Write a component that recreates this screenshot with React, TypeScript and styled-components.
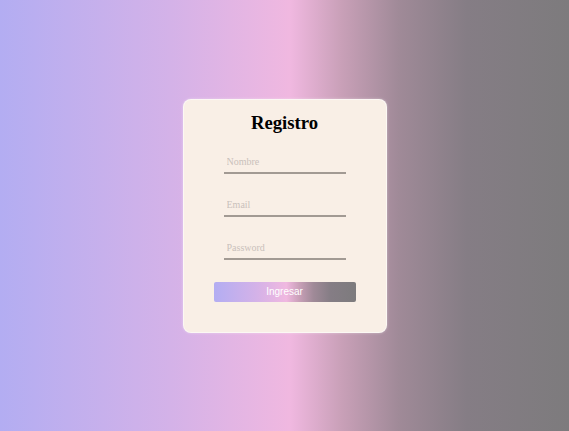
import React from "react";
import styled, { createGlobalStyle } from "styled-components";

const GRADIENT =
  "linear-gradient(90deg, #b3adf2 0%, #d4b2e8 30%, #f0b8e0 51%, #c9a0b8 60%, #a08a98 70%, #857d85 82%, #7d7b7d 100%)";

const Global = createGlobalStyle`
  html, body { margin: 0; padding: 0; }
  body { font-family: "Liberation Serif", "Times New Roman", serif; }
`;

const Page = styled.main`
  width: 100vw;
  height: 100vh;
  box-sizing: border-box;
  display: flex;
  align-items: center;
  justify-content: center;
  background: ${GRADIENT};
`;

const Card = styled.form`
  width: 204px;
  box-sizing: border-box;
  padding: 11px 0 30px;
  display: flex;
  flex-direction: column;
  align-items: center;
  background: #f9efe6;
  border: 1px solid rgba(255, 255, 255, 0.55);
  border-radius: 8px;
  box-shadow: 0 0 3px rgba(255, 255, 255, 0.4);
`;

const Title = styled.h3`
  margin: 0 0 17px;
  font-family: "Liberation Serif", "Times New Roman", serif;
  font-size: 18.72px;
  line-height: 24px;
  font-weight: bold;
  color: #000;
`;

const Field = styled.input`
  width: 122px;
  height: 22px;
  box-sizing: border-box;
  margin: 0 0 21px;
  padding: 4px 3px;
  border: none;
  border-bottom: 2px solid #a29a93;
  background: transparent;
  font-family: "Liberation Serif", "Times New Roman", serif;
  font-size: 10px;
  color: #333;
  outline: none;
  &::placeholder { color: #c9c1bb; }
`;

const Submit = styled.button`
  width: 142px;
  height: 20px;
  margin-top: 1px;
  border: none;
  border-radius: 2px;
  background: ${GRADIENT};
  color: #fff;
  font-family: "Liberation Sans", Arial, sans-serif;
  font-size: 10px;
  cursor: pointer;
`;

export default function App() {
  return (
    <>
      <Global />
      <Page>
        <Card onSubmit={(e) => e.preventDefault()}>
          <Title>Registro</Title>
          <Field type="text" placeholder="Nombre" />
          <Field type="email" placeholder="Email" />
          <Field type="password" placeholder="Password" />
          <Submit type="submit">Ingresar</Submit>
        </Card>
      </Page>
    </>
  );
}
